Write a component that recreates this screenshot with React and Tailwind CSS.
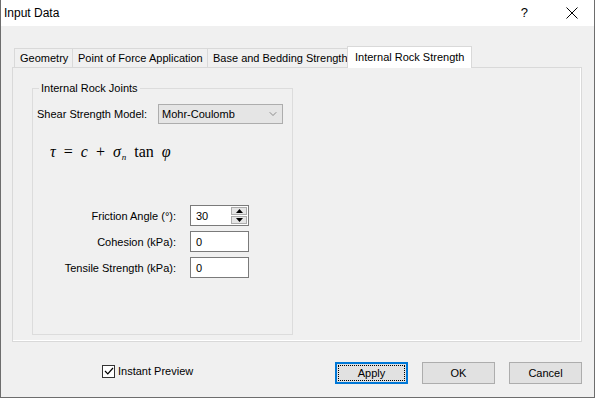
import { ChevronDown } from "lucide-react";

const tabs = [
  { label: "Geometry", w: "w-[58px]" },
  { label: "Point of Force Application", w: "w-[135px]" },
  { label: "Base and Bedding Strength", w: "w-[140px]" },
];

const Field = ({ label, value, spin }) => (
  <div className="flex items-center h-[21px]">
    <div className="w-[139px] text-right whitespace-nowrap">{label}</div>
    <div className="ml-[14px] w-[59px] h-[21px] bg-white border border-[#7a7a7a] flex items-center">
      <span className="pl-[5px] flex-1">{value}</span>
      {spin && (
        <div className="w-[17px] h-full flex flex-col gap-[1px] p-[1px] pl-0">
          <div className="flex-1 bg-[#e5e5e5] border border-[#acacac] flex items-center justify-center">
            <svg width="7" height="4" viewBox="0 0 7 4">
              <path d="M3.5 0 L7 4 L0 4 Z" fill="#000" />
            </svg>
          </div>
          <div className="flex-1 bg-[#e5e5e5] border border-[#acacac] flex items-center justify-center">
            <svg width="7" height="4" viewBox="0 0 7 4">
              <path d="M0 0 L7 0 L3.5 4 Z" fill="#000" />
            </svg>
          </div>
        </div>
      )}
    </div>
  </div>
);

export default function App() {
  return (
    <div className="w-[595px] h-[398px] bg-[#f0f0f0] border-x border-b border-[#6d6d6d] flex flex-col font-['Liberation_Sans',Arial,sans-serif] text-[11px] leading-[16px] text-black">
      {/* title bar */}
      <div className="h-[26px] bg-white flex items-center shrink-0">
        <span className="pl-[3px] text-[12px]">Input Data</span>
        <span className="ml-auto mr-[38px] text-[13px]">?</span>
        <svg width="12" height="12" viewBox="0 0 12 12" className="mr-[16px]">
          <path d="M0.5 0.5 L11.5 11.5 M11.5 0.5 L0.5 11.5" stroke="#000" strokeWidth="1" />
        </svg>
      </div>

      <div className="pl-[11px] pt-[20px]">
        {/* tab strip */}
        <div className="flex items-end h-[21px] pl-[2px]">
          {tabs.map((t) => (
            <div
              key={t.label}
              className={`${t.w} h-[19px] border-t border-l border-[#d9d9d9] bg-[#f0f0f0] flex items-center pl-[5px] whitespace-nowrap`}
            >
              {t.label}
            </div>
          ))}
          <div className="relative z-10 w-[125px] h-[22px] -mb-[1px] bg-white border-x border-t border-[#d9d9d9] flex items-center pl-[7px] pb-[1px] whitespace-nowrap">
            Internal Rock Strength
          </div>
        </div>

        {/* tab page */}
        <div className="w-[570px] h-[275px] border border-[#d9d9d9] shadow-[inset_-1px_-1px_0_#ffffff] pl-[19px] pt-[12px]">
          <fieldset className="w-[261px] h-[255px] border border-[#dcdcdc] px-[4px]">
            <legend className="ml-[2px] px-[2px] leading-[16px]">Internal Rock Joints</legend>

            <div className="flex items-center mt-[8px] h-[20px]">
              <span className="w-[121px] whitespace-nowrap">Shear Strength Model:</span>
              <div className="w-[125px] h-[20px] bg-[#e5e5e5] border border-[#adadad] flex items-center pl-[3px] pr-[3px]">
                <span className="flex-1">Mohr-Coulomb</span>
                <ChevronDown size={12} strokeWidth={1.25} className="text-[#555]" />
              </div>
            </div>

            <div className="ml-[13px] mt-[18px] h-[20px] flex items-center font-['Liberation_Serif',serif] text-[16px] whitespace-pre">
              <i>τ</i>
              <span>  =  </span>
              <i>c</i>
              <span>  +  </span>
              <i>σ</i>
              <i className="text-[9px] mt-[9px] ml-[1px]">n</i>
              <span>  tan  </span>
              <i>φ</i>
            </div>

            <div className="mt-[43px] flex flex-col gap-[5px]">
              <Field label="Friction Angle (°):" value="30" spin />
              <Field label="Cohesion (kPa):" value="0" />
              <Field label="Tensile Strength (kPa):" value="0" />
            </div>
          </fieldset>
        </div>

        {/* bottom row */}
        <div className="flex items-start mt-[20px] w-[570px]">
          <label className="ml-[90px] mt-[1px] flex items-center gap-[3px]">
            <span className="w-[13px] h-[13px] border border-[#333] bg-white flex items-center justify-center">
              <svg width="10" height="8" viewBox="0 0 10 8">
                <path d="M1 4 L3.8 6.8 L9 1" stroke="#000" strokeWidth="1.2" fill="none" />
              </svg>
            </span>
            <span>Instant Preview</span>
          </label>
          <div className="ml-auto flex gap-[14px]">
            <button className="w-[73px] h-[22px] bg-[#e1e1e1] border-2 border-[#0078d7] p-[1px] flex">
              <span className="flex-1 border border-dotted border-black flex items-center justify-center">Apply</span>
            </button>
            <button className="w-[73px] h-[22px] bg-[#e1e1e1] border border-[#adadad]">OK</button>
            <button className="w-[73px] h-[22px] bg-[#e1e1e1] border border-[#adadad]">Cancel</button>
          </div>
        </div>
      </div>
    </div>
  );
}
